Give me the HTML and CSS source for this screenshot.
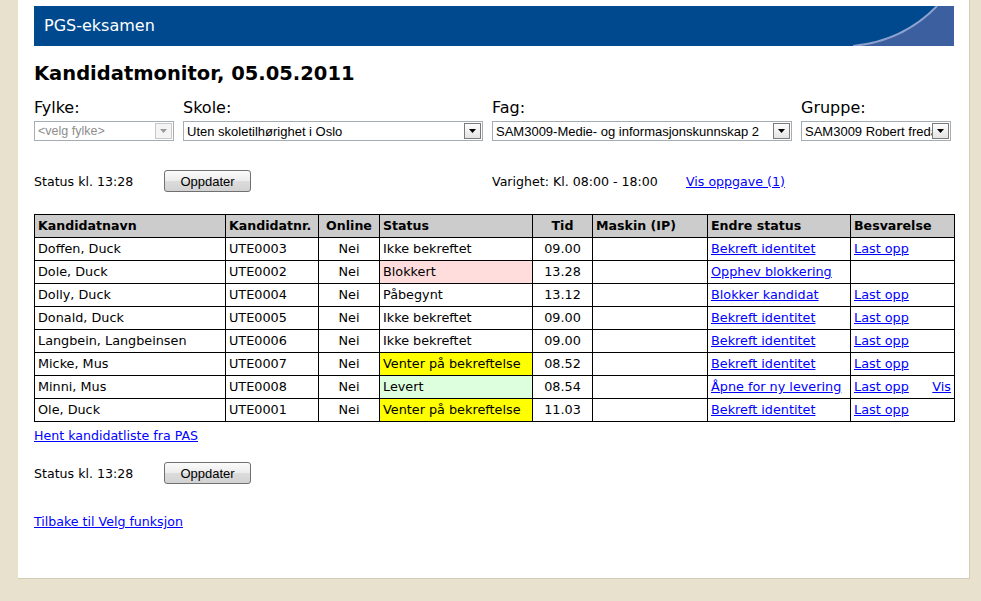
FILE: index.html
```html
<!DOCTYPE html>
<html lang="no">
<head>
<meta charset="utf-8">
<title>Kandidatmonitor</title>
<link rel="stylesheet" href="styles.css">
</head>
<body>
<div class="page">
  <div class="banner">
    <span class="banner-title">PGS-eksamen</span>
    <svg class="banner-swoosh" width="101" height="40" viewBox="0 0 101 40">
      <path d="M0,40 C30,37 60,25 84,0 L101,0 L101,40 Z" fill="#3b5f9f"/>
      <path d="M0,40 C30,37 60,25 84,0" fill="none" stroke="#8ea2cf" stroke-width="2"/>
    </svg>
  </div>

  <h1 class="title">Kandidatmonitor, 05.05.2011</h1>

  <div class="filters">
    <div class="filter">
      <div class="filter-label">Fylke:</div>
      <div class="select select-disabled select-fylke">
        <span class="select-text">&lt;velg fylke&gt;</span>
        <span class="select-arrow"><svg width="7" height="4" viewBox="0 0 7 4"><path d="M0,0 L7,0 L3.5,4 Z"/></svg></span>
      </div>
    </div>
    <div class="filter">
      <div class="filter-label">Skole:</div>
      <div class="select select-wide">
        <span class="select-text">Uten skoletilhørighet i Oslo</span>
        <span class="select-arrow"><svg width="7" height="4" viewBox="0 0 7 4"><path d="M0,0 L7,0 L3.5,4 Z"/></svg></span>
      </div>
    </div>
    <div class="filter">
      <div class="filter-label">Fag:</div>
      <div class="select select-wide">
        <span class="select-text">SAM3009-Medie- og informasjonskunnskap 2</span>
        <span class="select-arrow"><svg width="7" height="4" viewBox="0 0 7 4"><path d="M0,0 L7,0 L3.5,4 Z"/></svg></span>
      </div>
    </div>
    <div class="filter">
      <div class="filter-label">Gruppe:</div>
      <div class="select select-gruppe">
        <span class="select-text">SAM3009 Robert freda</span>
        <span class="select-arrow"><svg width="7" height="4" viewBox="0 0 7 4"><path d="M0,0 L7,0 L3.5,4 Z"/></svg></span>
      </div>
    </div>
  </div>

  <div class="status-row status-row-top">
    <span class="status-text">Status kl. 13:28</span>
    <button class="btn" type="button">Oppdater</button>
    <span class="varighet">Varighet: Kl. 08:00 - 18:00</span>
    <a class="link" href="#">Vis oppgave (1)</a>
  </div>

  <table class="candidates">
    <colgroup>
      <col class="c-navn"><col class="c-nr"><col class="c-online"><col class="c-status"><col class="c-tid"><col class="c-ip"><col class="c-endre"><col class="c-besv">
    </colgroup>
    <thead>
      <tr><th>Kandidatnavn</th><th>Kandidatnr.</th><th class="center">Online</th><th>Status</th><th class="center">Tid</th><th>Maskin (IP)</th><th>Endre status</th><th>Besvarelse</th></tr>
    </thead>
    <tbody>
      <tr><td>Doffen, Duck</td><td>UTE0003</td><td class="center">Nei</td><td>Ikke bekreftet</td><td class="center">09.00</td><td></td><td><a class="link" href="#">Bekreft identitet</a></td><td><a class="link" href="#">Last opp</a></td></tr>
      <tr><td>Dole, Duck</td><td>UTE0002</td><td class="center">Nei</td><td class="st-blocked">Blokkert</td><td class="center">13.28</td><td></td><td><a class="link" href="#">Opphev blokkering</a></td><td></td></tr>
      <tr><td>Dolly, Duck</td><td>UTE0004</td><td class="center">Nei</td><td>Påbegynt</td><td class="center">13.12</td><td></td><td><a class="link" href="#">Blokker kandidat</a></td><td><a class="link" href="#">Last opp</a></td></tr>
      <tr><td>Donald, Duck</td><td>UTE0005</td><td class="center">Nei</td><td>Ikke bekreftet</td><td class="center">09.00</td><td></td><td><a class="link" href="#">Bekreft identitet</a></td><td><a class="link" href="#">Last opp</a></td></tr>
      <tr><td>Langbein, Langbeinsen</td><td>UTE0006</td><td class="center">Nei</td><td>Ikke bekreftet</td><td class="center">09.00</td><td></td><td><a class="link" href="#">Bekreft identitet</a></td><td><a class="link" href="#">Last opp</a></td></tr>
      <tr><td>Micke, Mus</td><td>UTE0007</td><td class="center">Nei</td><td class="st-waiting">Venter på bekreftelse</td><td class="center">08.52</td><td></td><td><a class="link" href="#">Bekreft identitet</a></td><td><a class="link" href="#">Last opp</a></td></tr>
      <tr><td>Minni, Mus</td><td>UTE0008</td><td class="center">Nei</td><td class="st-delivered">Levert</td><td class="center">08.54</td><td></td><td><a class="link" href="#">Åpne for ny levering</a></td><td><span class="besv-split"><a class="link" href="#">Last opp</a><a class="link" href="#">Vis</a></span></td></tr>
      <tr><td>Ole, Duck</td><td>UTE0001</td><td class="center">Nei</td><td class="st-waiting">Venter på bekreftelse</td><td class="center">11.03</td><td></td><td><a class="link" href="#">Bekreft identitet</a></td><td><a class="link" href="#">Last opp</a></td></tr>
    </tbody>
  </table>

  <div class="after-table"><a class="link" href="#">Hent kandidatliste fra PAS</a></div>

  <div class="status-row status-row-bottom">
    <span class="status-text">Status kl. 13:28</span>
    <button class="btn" type="button">Oppdater</button>
  </div>

  <div class="back"><a class="link" href="#">Tilbake til Velg funksjon</a></div>
</div>
</body>
</html>
```

FILE: styles.css
```css
html, body {
  margin: 0;
  padding: 0;
  background: #e7e1ce;
}

body {
  font-family: "DejaVu Sans", Verdana, sans-serif;
  font-size: 12.6px;
  color: #000;
}

.page {
  box-sizing: border-box;
  margin-left: 18px;
  width: 952px;
  height: 579px;
  padding: 6px 15px 0 16px;
  background: #fff;
  border-right: 1px solid #d3cdb8;
  border-bottom: 1px solid #d3cdb8;
}

.banner {
  display: flex;
  align-items: center;
  height: 40px;
  background: #00498f;
}

.banner-title {
  padding-left: 10px;
  color: #fff;
  font-size: 16px;
  line-height: 20px;
}

.banner-swoosh {
  display: block;
  margin-left: auto;
}

.title {
  margin: 16px 0 12px;
  font-size: 19.5px;
  line-height: 24px;
  font-weight: bold;
}

.filters {
  display: flex;
  gap: 9px;
}

.filter-label {
  font-size: 16px;
  line-height: 20px;
  margin-bottom: 3px;
}

.select {
  box-sizing: border-box;
  display: flex;
  align-items: center;
  height: 20px;
  border: 1px solid #a5acb2;
  background: #fff;
  font-family: "Liberation Sans", Arial, sans-serif;
  font-size: 13px;
}

.select-fylke { width: 140px; }
.select-wide { width: 300px; }
.select-gruppe { width: 150px; }

.select-text {
  flex: 1;
  min-width: 0;
  padding-left: 3px;
  white-space: nowrap;
  overflow: hidden;
}

.select-arrow {
  box-sizing: border-box;
  display: flex;
  align-items: center;
  justify-content: center;
  width: 17px;
  height: 16px;
  margin-right: 1px;
  border: 1px solid #7a7a7a;
  background: linear-gradient(#fdfdfd, #e4e4e4);
}

.select-arrow svg {
  display: block;
  fill: #000;
}

.select-disabled .select-text {
  color: #8d8d8d;
  font-size: 12.5px;
}

.select-disabled .select-arrow {
  border-color: #c9c9c9;
  background: #f4f4f4;
}

.select-disabled .select-arrow svg {
  fill: #9a9a9a;
}

.status-row {
  display: flex;
  align-items: center;
}

.status-row-top {
  margin-top: 29px;
}

.status-text {
  width: 130px;
}

.btn {
  box-sizing: border-box;
  width: 87px;
  height: 22px;
  padding: 0;
  border: 1px solid #707070;
  border-radius: 3px;
  background: linear-gradient(#fbfbfb, #ececec 50%, #dcdcdc 51%, #d2d2d2);
  font-family: "Liberation Sans", Arial, sans-serif;
  font-size: 13px;
  color: #000;
}

.varighet {
  margin-left: 241px;
  width: 194px;
}

.link {
  color: #0000ff;
  text-decoration: underline;
}

.candidates {
  margin-top: 22px;
  width: 920px;
  table-layout: fixed;
  border-collapse: collapse;
}

.c-navn { width: 191px; }
.c-nr { width: 93px; }
.c-online { width: 61px; }
.c-status { width: 153px; }
.c-tid { width: 60px; }
.c-ip { width: 115px; }
.c-endre { width: 143px; }
.c-besv { width: 104px; }

.candidates th,
.candidates td {
  height: 22px;
  padding: 0 3px;
  border: 1px solid #000;
  text-align: left;
  white-space: nowrap;
  line-height: 16px;
}

.candidates td {
  font-size: 12.8px;
}

.candidates th {
  background: #cccccc;
  font-weight: bold;
}

.candidates .center {
  text-align: center;
}

.st-blocked { background: #ffdddd; }
.st-waiting { background: #ffff00; }
.st-delivered { background: #ddffdd; }

.besv-split {
  display: flex;
  justify-content: space-between;
}

.after-table {
  margin-top: 6px;
  line-height: 16px;
}

.status-row-bottom {
  margin-top: 18px;
}

.back {
  margin-top: 30px;
  line-height: 16px;
}
```
